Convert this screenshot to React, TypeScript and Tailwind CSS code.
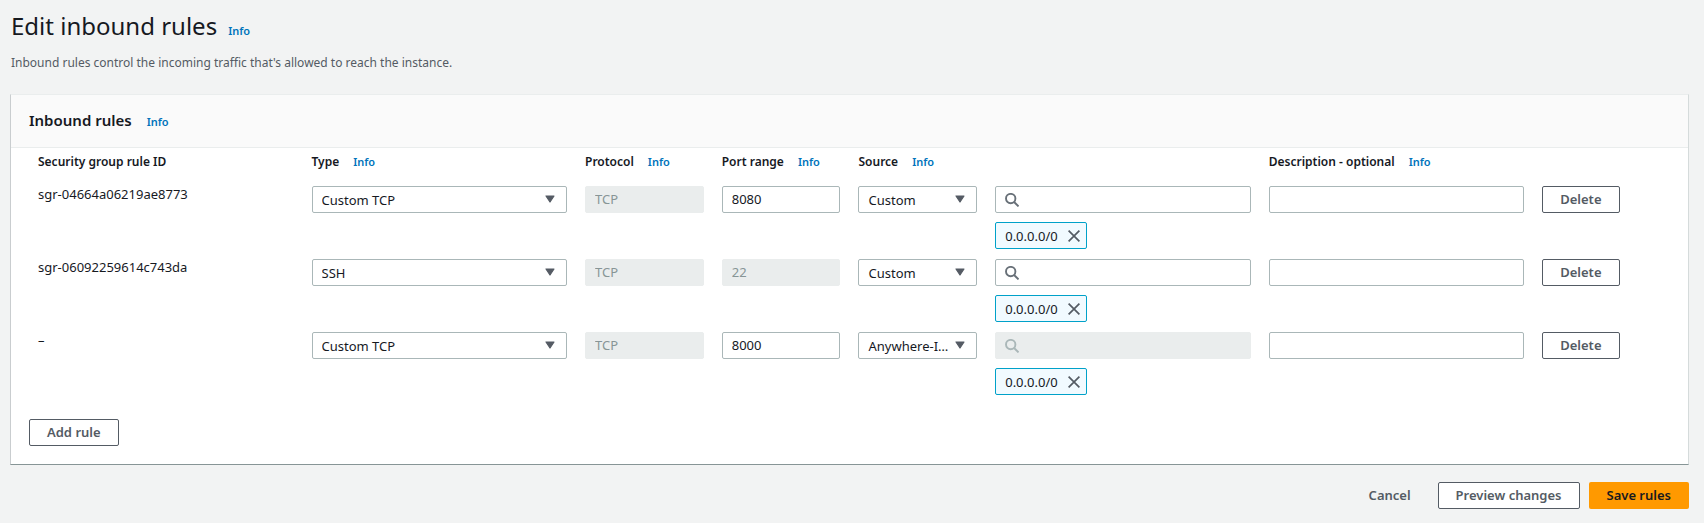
import React from "react";

type Rule = {
  id: string;
  type: string;
  port: string;
  portDisabled?: boolean;
  source: string;
  searchDisabled?: boolean;
  cidr: string;
};

const rules: Rule[] = [
  { id: "sgr-04664a06219ae8773", type: "Custom TCP", port: "8080", source: "Custom", cidr: "0.0.0.0/0" },
  { id: "sgr-06092259614c743da", type: "SSH", port: "22", portDisabled: true, source: "Custom", cidr: "0.0.0.0/0" },
  { id: "–", type: "Custom TCP", port: "8000", source: "Anywhere-IPv4", searchDisabled: true, cidr: "0.0.0.0/0" },
];

const typeOptions = ["Custom TCP", "SSH", "HTTP", "HTTPS"];
const sourceOptions = ["Custom", "Anywhere-IPv4", "My IP"];

function InfoLink() {
  return (
    <a href="#info" className="text-[11px] leading-4 font-semibold text-[#0073bb]">
      Info
    </a>
  );
}

function TextField({ label, value, disabled }: { label: string; value?: string; disabled?: boolean }) {
  return (
    <input
      type="text"
      aria-label={label}
      defaultValue={value}
      disabled={disabled}
      className="block h-[27px] w-full rounded-xs border border-[#aab7b8] bg-white px-[9px] pb-0.5 text-[13px] leading-5 text-[#16191f] disabled:border-[#eaeded] disabled:bg-[#eaeded] disabled:text-[#879596]"
    />
  );
}

function SelectField({ label, value, options }: { label: string; value: string; options: string[] }) {
  return (
    <div className="relative">
      <select
        aria-label={label}
        defaultValue={value}
        className="block h-[27px] w-full appearance-none truncate rounded-xs border border-[#aab7b8] bg-white pr-6 pl-[9px] text-[13px] leading-5 text-[#16191f]"
      >
        {options.map((o) => (
          <option key={o}>{o}</option>
        ))}
      </select>
      <svg viewBox="0 0 10 8" className="pointer-events-none absolute top-[9px] right-3 h-2 w-[10px]" aria-hidden="true">
        <path d="M1 1h8L5 7z" fill="#545b64" stroke="#545b64" strokeWidth="1.2" strokeLinejoin="round" />
      </svg>
    </div>
  );
}

function SearchField({ disabled }: { disabled?: boolean }) {
  return (
    <div className="relative">
      <input
        type="search"
        aria-label="Source"
        disabled={disabled}
        className="block h-[27px] w-full rounded-xs border border-[#aab7b8] bg-white pr-[9px] pl-8 text-[13px] leading-5 text-[#16191f] disabled:border-[#eaeded] disabled:bg-[#eaeded]"
      />
      <svg
        viewBox="0 0 14 14"
        className={
          disabled
            ? "pointer-events-none absolute top-[7px] left-[10px] size-[14px] text-[#aab7b8]"
            : "pointer-events-none absolute top-[7px] left-[10px] size-[14px] text-[#687078]"
        }
        fill="none"
        stroke="currentColor"
        strokeWidth="1.9"
        aria-hidden="true"
      >
        <circle cx="5.7" cy="5.6" r="4.7" />
        <path d="M9.1 9l4.4 4.4" />
      </svg>
    </div>
  );
}

function Token({ value }: { value: string }) {
  return (
    <div className="mt-[9px] flex h-[27px] w-fit items-center gap-[10px] rounded-xs border border-[#00a1c9] bg-[#f1faff] pr-[6px] pl-[9px] text-[13px] leading-5 text-[#16191f]">
      {value}
      <button type="button" aria-label={`Remove ${value}`}>
        <svg viewBox="0 0 12 12" className="block size-3" fill="none" stroke="#545b64" strokeWidth="1.7" aria-hidden="true">
          <path d="M.6.6l10.8 10.8M11.4.6L.6 11.4" />
        </svg>
      </button>
    </div>
  );
}

function Button({ children }: { children: React.ReactNode }) {
  return (
    <button
      type="button"
      className="h-[27px] rounded-xs border border-[#545b64] bg-white px-[17px] pb-0.5 text-[13px] leading-5 font-semibold text-[#545b64]"
    >
      {children}
    </button>
  );
}

function HeaderCell({ title, info, span }: { title: string; info?: boolean; span?: number }) {
  return (
    <th scope="col" colSpan={span} className="px-[9px] pt-1 text-left align-top text-xs leading-5 font-semibold">
      <span className="flex items-baseline gap-[14px] whitespace-nowrap">
        {title}
        {info && <InfoLink />}
      </span>
    </th>
  );
}

export default function App() {
  return (
    <div className="min-h-screen bg-[#f2f3f3] pt-[10px] pr-[15px] pb-[14px] pl-[10px] font-['Noto_Sans',sans-serif] text-[13px] leading-5 text-[#16191f]">
      <header className="pl-px">
        <h1 className="flex items-baseline gap-[11px] text-2xl leading-8">
          Edit inbound rules
          <InfoLink />
        </h1>
        <p className="mt-[11px] text-xs leading-5 text-[#545b64]">
          Inbound rules control the incoming traffic that's allowed to reach the instance.
        </p>
      </header>

      <main className="mt-[21px] border border-t-[#eaeded] border-r-[#d5dbdb] border-b-[#879596] border-l-[#c9cdcf] bg-white pb-[18px]">
        <h2 className="flex items-baseline gap-[15px] border-b border-[#eaeded] bg-[#fafafa] px-[18px] pt-[13px] pb-[15px] text-[15px] leading-6 font-semibold">
          Inbound rules
          <InfoLink />
        </h2>

        <div className="px-[18px]">
          <table className="w-full table-fixed border-collapse">
            <colgroup>
              <col className="w-2/12" />
              <col className="w-2/12" />
              <col className="w-1/12" />
              <col className="w-1/12" />
              <col className="w-1/12" />
              <col className="w-2/12" />
              <col className="w-2/12" />
              <col className="w-1/12" />
            </colgroup>
            <thead>
              <tr className="h-7">
                <HeaderCell title="Security group rule ID" />
                <HeaderCell title="Type" info />
                <HeaderCell title="Protocol" info />
                <HeaderCell title="Port range" info />
                <HeaderCell title="Source" info span={2} />
                <HeaderCell title="Description - optional" info />
                <td />
              </tr>
            </thead>
            <tbody>
              {rules.map((r) => (
                <tr key={r.id} className="align-top">
                  <td className="px-[9px] pt-2">{r.id}</td>
                  <td className="px-[9px] pt-[10px]">
                    <SelectField label="Type" value={r.type} options={typeOptions} />
                  </td>
                  <td className="px-[9px] pt-[10px]">
                    <TextField label="Protocol" value="TCP" disabled />
                  </td>
                  <td className="px-[9px] pt-[10px]">
                    <TextField label="Port range" value={r.port} disabled={r.portDisabled} />
                  </td>
                  <td className="px-[9px] pt-[10px]">
                    <SelectField label="Source type" value={r.source} options={sourceOptions} />
                  </td>
                  <td className="px-[9px] pt-[10px]">
                    <SearchField disabled={r.searchDisabled} />
                    <Token value={r.cidr} />
                  </td>
                  <td className="px-[9px] pt-[10px]">
                    <TextField label="Description - optional" />
                  </td>
                  <td className="px-[9px] pt-[10px]">
                    <Button>Delete</Button>
                  </td>
                </tr>
              ))}
            </tbody>
          </table>

          <div className="mt-6 flex">
            <Button>Add rule</Button>
          </div>
        </div>
      </main>

      <footer className="mt-[17px] flex items-center justify-end gap-[9px]">
        <button type="button" className="h-[27px] px-[18px] pb-0.5 font-semibold text-[#545b64]">
          Cancel
        </button>
        <Button>Preview changes</Button>
        <button type="button" className="h-[27px] rounded-xs bg-[#ff9900] px-[18px] pb-0.5 font-semibold text-[#16191f]">
          Save rules
        </button>
      </footer>
    </div>
  );
}
